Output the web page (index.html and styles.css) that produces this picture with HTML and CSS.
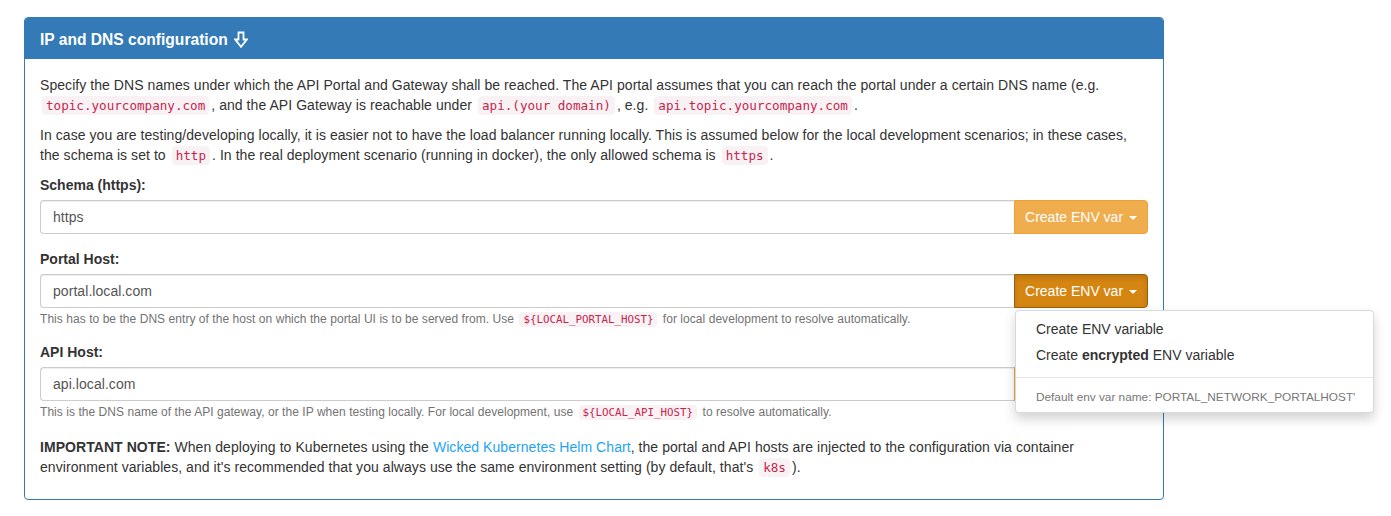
FILE: index.html
```html
<!DOCTYPE html>
<html>
<head>
<meta charset="utf-8">
<link rel="stylesheet" href="styles.css">
</head>
<body>
<div class="page">
  <div class="panel">
    <div class="panel-heading">IP and DNS configuration <svg class="arrow" width="14" height="18" viewBox="0 0 14 18"><polygon points="4.5,1.5 9.5,1.5 9.5,8.5 12.8,8.5 7,15.8 1.2,8.5 4.5,8.5" fill="none" stroke="#fff" stroke-width="1.8" stroke-linejoin="miter"/></svg></div>
    <div class="panel-body">
      <p>Specify the DNS names under which the API Portal and Gateway shall be reached. The API portal assumes that you can reach the portal under a certain DNS name (e.g. <code>topic.yourcompany.com</code>, and the API Gateway is reachable under <code>api.(your domain)</code>, e.g. <code>api.topic.yourcompany.com</code>.</p>
      <p>In case you are testing/developing locally, it is easier not to have the load balancer running locally. This is assumed below for the local development scenarios; in these cases, the schema is set to <code>http</code>. In the real deployment scenario (running in docker), the only allowed schema is <code>https</code>.</p>

      <div class="form-group">
        <label class="label">Schema (https):</label>
        <div class="input-group">
          <div class="form-control">https</div>
          <div class="btn-wrap">
            <button class="btn">Create ENV var <span class="caret"></span></button>
          </div>
        </div>
      </div>

      <div class="form-group">
        <label class="label">Portal Host:</label>
        <div class="input-group">
          <div class="form-control">portal.local.com</div>
          <div class="btn-wrap">
            <button class="btn active">Create ENV var <span class="caret"></span></button>
            <ul class="dropdown-menu">
              <li class="item">Create ENV variable</li>
              <li class="item">Create <b>encrypted</b> ENV variable</li>
              <li class="divider"></li>
              <li class="dropdown-header">Default env var name: PORTAL_NETWORK_PORTALHOST'</li>
            </ul>
          </div>
        </div>
        <div class="help-block">This has to be the DNS entry of the host on which the portal UI is to be served from. Use <code>${LOCAL_PORTAL_HOST}</code> for local development to resolve automatically.</div>
      </div>

      <div class="form-group">
        <label class="label">API Host:</label>
        <div class="input-group">
          <div class="form-control">api.local.com</div>
          <div class="btn-wrap">
            <button class="btn">Create ENV var <span class="caret"></span></button>
          </div>
        </div>
        <div class="help-block">This is the DNS name of the API gateway, or the IP when testing locally. For local development, use <code>${LOCAL_API_HOST}</code> to resolve automatically.</div>
      </div>

      <p class="note"><b>IMPORTANT NOTE:</b> When deploying to Kubernetes using the <a class="link" href="#">Wicked Kubernetes Helm Chart</a>, the portal and API hosts are injected to the configuration via container environment variables, and it's recommended that you always use the same environment setting (by default, that's <code>k8s</code>).</p>
    </div>
  </div>
</div>
</body>
</html>
```

FILE: styles.css
```css
* { box-sizing: border-box; }
html, body { margin: 0; padding: 0; background: #fff; }
body {
  font-family: "Liberation Sans", Arial, Helvetica, sans-serif;
  font-size: 14px;
  line-height: 20px;
  color: #333;
  letter-spacing: 0.06px;
}
.page { padding: 17px 0 0 24px; }
.panel {
  width: 1140px;
  border: 1px solid #337ab7;
  border-radius: 4px;
  background: #fff;
}
.panel-heading {
  display: flex;
  align-items: center;
  gap: 6px;
  background: #337ab7;
  color: #fff;
  font-size: 15.6px;
  font-weight: bold;
  letter-spacing: 0;
  line-height: 20px;
  height: 41px;
  padding: 2px 15px 0;
  border-radius: 3px 3px 0 0;
}
.arrow { display: block; }
.panel-body { padding: 16px 15px 12px; }
p { margin: 0 0 10px; }
.note { margin-top: 17px; }
code {
  font-family: "DejaVu Sans Mono", Menlo, monospace;
  font-size: 90%;
  line-height: 1;
  letter-spacing: 0;
  padding: 2px 4px;
  color: #c7254e;
  background: #f9f2f4;
  border-radius: 4px;
  margin: 0 2px;
}
.form-group { margin-bottom: 15px; }
.form-group:last-of-type { margin-bottom: 0; }
.label {
  display: block;
  font-weight: bold;
  margin-bottom: 5px;
  letter-spacing: 0;
}
.input-group { display: flex; }
.form-control {
  flex: 1;
  height: 34px;
  padding: 6px 12px;
  border: 1px solid #ccc;
  border-right: 0;
  border-radius: 4px 0 0 4px;
  box-shadow: inset 0 1px 1px rgba(0,0,0,.075);
  color: #555;
  line-height: 20px;
}
.btn-wrap { position: relative; }
.btn {
  width: 134px;
  height: 34px;
  padding: 6px 0;
  font-family: inherit;
  font-size: 14px;
  line-height: 20px;
  letter-spacing: 0;
  color: #fff;
  background: #f0ad4e;
  border: 1px solid #eea236;
  border-radius: 0 4px 4px 0;
  white-space: nowrap;
  text-align: center;
  cursor: pointer;
}
.btn.active {
  background: #d58512;
  border-color: #985f0d;
  box-shadow: inset 0 3px 5px rgba(0,0,0,.125);
}
.caret {
  display: inline-block;
  width: 0;
  height: 0;
  margin-left: 2px;
  vertical-align: middle;
  border-top: 4px solid #fff;
  border-left: 4px solid transparent;
  border-right: 4px solid transparent;
}
.dropdown-menu {
  position: absolute;
  top: 100%;
  left: 1px;
  width: 359px;
  margin: 2px 0 0;
  padding: 5px 0;
  list-style: none;
  background: #fff;
  border: 1px solid rgba(0,0,0,.15);
  border-radius: 4px;
  box-shadow: 0 6px 12px rgba(0,0,0,.175);
  white-space: nowrap;
  letter-spacing: 0;
  z-index: 10;
}
.item { padding: 3px 20px; line-height: 20px; color: #333; }
.divider { height: 1px; margin: 9px 0; background: #e5e5e5; }
.dropdown-header {
  padding: 2px 20px 2px;
  font-size: 11.8px;
  line-height: 16px;
  color: #777;
}
.help-block {
  margin-top: 3px;
  font-size: 12px;
  line-height: 16px;
  letter-spacing: 0.05px;
  color: #737373;
}
.help-block code { font-size: 90%; padding: 1px 4px; }
.link { color: #1fa3ef; text-decoration: none; }
```
